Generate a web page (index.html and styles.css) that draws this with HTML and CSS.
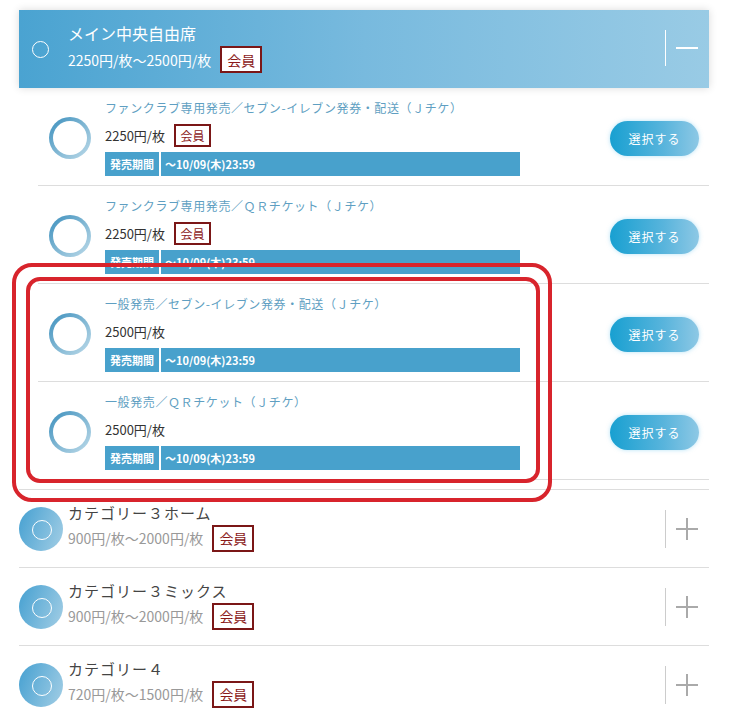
FILE: index.html
```html
<!DOCTYPE html>
<html lang="ja">
<head>
    <meta charset="UTF-8">
    <meta name="viewport" content="width=device-width, initial-scale=1.0">
    <title>席種選択</title>
    <link rel="stylesheet" href="styles.css">
</head>
<body>
    <div class="page">
        <section class="cat open">
            <div class="cat-head">
                <span class="radio"></span>
                <div class="cat-info">
                    <div class="cat-name">メイン中央自由席</div>
                    <div class="cat-price">2250円/枚〜2500円/枚<span class="badge">会員</span></div>
                </div>
                <div class="toggle">
                    <svg width="22" height="22" viewBox="0 0 22 22"><path d="M0 11H22" stroke="#fff" stroke-width="2"/></svg>
                </div>
            </div>
            <ul class="tickets">
                <li class="ticket">
                    <span class="ring"></span>
                    <div class="ticket-body">
                        <div class="ticket-name">ファンクラブ専用発売／セブン-イレブン発券・配送（Ｊチケ）</div>
                        <div class="ticket-price">2250円/枚<span class="badge small">会員</span></div>
                        <div class="period"><span class="period-label">発売期間</span><span class="period-value">〜10/09(木)23:59</span></div>
                    </div>
                    <button class="select-btn">選択する</button>
                </li>
                <li class="ticket">
                    <span class="ring"></span>
                    <div class="ticket-body">
                        <div class="ticket-name">ファンクラブ専用発売／ＱＲチケット（Ｊチケ）</div>
                        <div class="ticket-price">2250円/枚<span class="badge small">会員</span></div>
                        <div class="period"><span class="period-label">発売期間</span><span class="period-value">〜10/09(木)23:59</span></div>
                    </div>
                    <button class="select-btn">選択する</button>
                </li>
                <li class="ticket">
                    <span class="ring"></span>
                    <div class="ticket-body">
                        <div class="ticket-name">一般発売／セブン-イレブン発券・配送（Ｊチケ）</div>
                        <div class="ticket-price">2500円/枚</div>
                        <div class="period"><span class="period-label">発売期間</span><span class="period-value">〜10/09(木)23:59</span></div>
                    </div>
                    <button class="select-btn">選択する</button>
                </li>
                <li class="ticket">
                    <span class="ring"></span>
                    <div class="ticket-body">
                        <div class="ticket-name">一般発売／ＱＲチケット（Ｊチケ）</div>
                        <div class="ticket-price">2500円/枚</div>
                        <div class="period"><span class="period-label">発売期間</span><span class="period-value">〜10/09(木)23:59</span></div>
                    </div>
                    <button class="select-btn">選択する</button>
                </li>
            </ul>
        </section>

        <section class="cat">
            <div class="cat-row">
                <span class="disc"></span>
                <div class="cat-info">
                    <div class="cat-name">カテゴリー３ホーム</div>
                    <div class="cat-price">900円/枚〜2000円/枚<span class="badge">会員</span></div>
                </div>
                <div class="toggle">
                    <svg width="22" height="22" viewBox="0 0 22 22"><path d="M0 11H22M11 0V22" stroke="#aaa" stroke-width="2"/></svg>
                </div>
            </div>
        </section>
        <section class="cat">
            <div class="cat-row">
                <span class="disc"></span>
                <div class="cat-info">
                    <div class="cat-name">カテゴリー３ミックス</div>
                    <div class="cat-price">900円/枚〜2000円/枚<span class="badge">会員</span></div>
                </div>
                <div class="toggle">
                    <svg width="22" height="22" viewBox="0 0 22 22"><path d="M0 11H22M11 0V22" stroke="#aaa" stroke-width="2"/></svg>
                </div>
            </div>
        </section>
        <section class="cat">
            <div class="cat-row">
                <span class="disc"></span>
                <div class="cat-info">
                    <div class="cat-name">カテゴリー４</div>
                    <div class="cat-price">720円/枚〜1500円/枚<span class="badge">会員</span></div>
                </div>
                <div class="toggle">
                    <svg width="22" height="22" viewBox="0 0 22 22"><path d="M0 11H22M11 0V22" stroke="#aaa" stroke-width="2"/></svg>
                </div>
            </div>
        </section>

        <!-- 注目枠 -->
        <div class="mark mark-outer"></div>
        <div class="mark mark-inner"></div>
    </div>
</body>
</html>
```

FILE: styles.css
```css
* {
    margin: 0;
    padding: 0;
    box-sizing: border-box;
}

body {
    font-family: 'Noto Sans CJK JP', sans-serif;
    background-color: #fff;
    color: #333;
}

.page {
    position: relative;
    width: 690px;
    margin-left: 19px;
    padding-top: 10px;
}

/* カテゴリー */
.cat {
    border-bottom: 1px solid #ddd;
}

.cat-head {
    display: flex;
    align-items: center;
    height: 78px;
    padding: 0 11px 3px 13px;
    background: linear-gradient(to right, #4aa3d1, #78bade 50%, #99cbe5);
    box-shadow: 0 0 8px rgba(0, 0, 0, 0.15);
    color: #fff;
}

.cat-head .cat-info {
    margin-left: 19px;
}

.radio {
    width: 17px;
    height: 17px;
    margin-top: 3px;
    border: 1.5px solid #fff;
    border-radius: 50%;
    flex-shrink: 0;
}

.cat-info {
    flex: 1;
}

.cat-name {
    font-size: 16px;
    line-height: 22px;
}

.cat-price {
    display: flex;
    align-items: center;
    font-size: 14px;
    margin-top: 2px;
}

.badge {
    display: inline-flex;
    align-items: center;
    justify-content: center;
    width: 42px;
    height: 27px;
    margin-left: 9px;
    background-color: #fff;
    border: 2px solid #7b1717;
    color: #8b1a1a;
    font-size: 14px;
}

.badge.small {
    width: 37px;
    height: 23px;
    font-size: 12px;
}

.toggle {
    display: flex;
    align-items: center;
    height: 36px;
    padding-left: 10px;
    border-left: 1px solid #fff;
}

.toggle svg {
    display: block;
}

.cat-row {
    display: flex;
    align-items: center;
    height: 77px;
    padding: 0 11px 0 0;
}

.cat-row .cat-info {
    padding-bottom: 4px;
}

.cat-row .cat-name {
    color: #444;
    font-size: 15px;
    letter-spacing: 1px;
}

.cat-row .cat-price {
    color: #999;
    font-size: 14px;
    margin-top: 1px;
}

.cat-row .toggle {
    height: 38px;
    border-left-color: #ccc;
}

.disc {
    position: relative;
    width: 44px;
    height: 44px;
    margin-right: 5px;
    border-radius: 50%;
    background: linear-gradient(110deg, #45a0d1, #a3cee5);
    flex-shrink: 0;
}

.disc::after {
    content: '';
    position: absolute;
    top: 13px;
    left: 13px;
    width: 18px;
    height: 18px;
    border: 1.5px solid #fff;
    border-radius: 50%;
}

/* 券種 */
.tickets {
    list-style: none;
    margin-left: 19px;
    padding-bottom: 9px;
}

.ticket {
    display: flex;
    align-items: center;
    padding: 12px 10px 9px 11px;
    border-bottom: 1px solid #ddd;
}

.ring {
    position: relative;
    width: 42px;
    height: 42px;
    border-radius: 50%;
    background: linear-gradient(135deg, #3b8fbd, #7fb6d3 50%, #bddbea);
    flex-shrink: 0;
}

.ring::after {
    content: '';
    position: absolute;
    inset: 4px;
    border-radius: 50%;
    background-color: #fff;
}

.ticket-body {
    flex: 1;
    margin-left: 14px;
}

.ticket-name {
    color: #5f9fc2;
    font-size: 12px;
    line-height: 16px;
    letter-spacing: 0.6px;
}

.ticket-price {
    display: flex;
    align-items: center;
    height: 23px;
    margin-top: 8px;
    font-size: 13px;
}

.period {
    display: flex;
    gap: 2px;
    width: 415px;
    height: 24px;
    margin-top: 5px;
    color: #fff;
    font-size: 11px;
    font-weight: bold;
}

.period span {
    display: flex;
    align-items: center;
    background-color: #48a1cc;
}

.period-label {
    width: 54px;
    justify-content: center;
}

.period-value {
    flex: 1;
    padding-left: 4px;
}

.select-btn {
    width: 89px;
    height: 35px;
    border: none;
    border-radius: 18px;
    background: linear-gradient(to right, #18a0d1, #58b4dc 60%, #8dc8e5);
    box-shadow: 0 0 4px rgba(110, 200, 240, 0.5);
    color: #fff;
    font-family: inherit;
    font-size: 12px;
    letter-spacing: 1px;
    cursor: pointer;
}

/* 赤枠 */
.mark {
    position: absolute;
    border: 4px solid #d8242c;
    pointer-events: none;
}

.mark-outer {
    left: -7px;
    top: 263px;
    width: 540px;
    height: 239px;
    border-radius: 20px;
}

.mark-inner {
    left: 7px;
    top: 277px;
    width: 514px;
    height: 206px;
    border-radius: 14px;
}
```
